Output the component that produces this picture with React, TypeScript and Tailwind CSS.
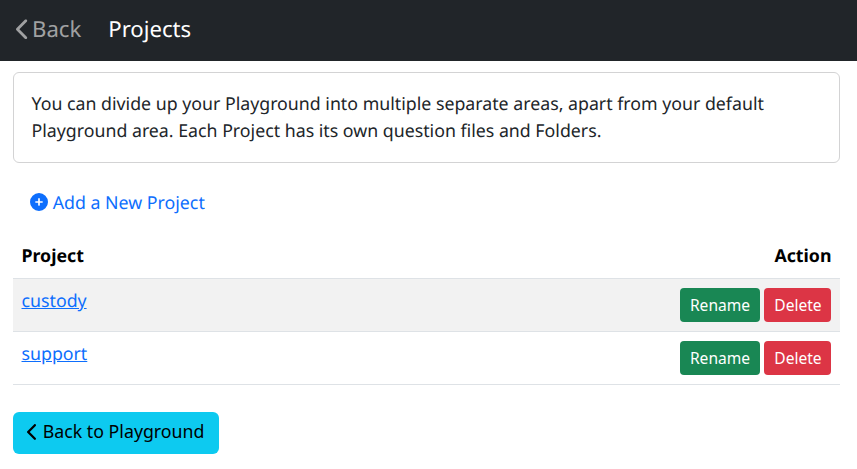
import React from "react";

const projects = ["custody", "support"];

function ChevronLeft({ className }: { className: string }) {
  return (
    <svg viewBox="0 0 320 512" fill="currentColor" className={className} aria-hidden="true">
      <path d="M9.4 233.4c-12.5 12.5-12.5 32.8 0 45.3l192 192c12.5 12.5 32.8 12.5 45.3 0s12.5-32.8 0-45.3L77.3 256 246.6 86.6c12.5-12.5 12.5-32.8 0-45.3s-32.8-12.5-45.3 0l-192 192z" />
    </svg>
  );
}

function CirclePlus({ className }: { className: string }) {
  return (
    <svg viewBox="0 0 512 512" fill="currentColor" className={className} aria-hidden="true">
      <path d="M256 512A256 256 0 1 0 256 0a256 256 0 1 0 0 512zM232 344V280H168c-13.300 0-24-10.700-24-24s10.700-24 24-24h64V168c0-13.300 10.700-24 24-24s24 10.700 24 24v64h64c13.300 0 24 10.700 24 24s-10.700 24-24 24H280v64c0 13.300-10.700 24-24 24s-24-10.700-24-24z" />
    </svg>
  );
}

export default function App() {
  return (
    <div className="h-[469px] w-[857px] overflow-hidden bg-white font-['Noto_Sans',sans-serif] text-[17.75px] leading-[27px] text-[#212529] [text-rendering:geometricPrecision]">
      <nav className="flex h-[61px] items-center bg-[#212529] px-[15px] pb-[2px] text-[22.15px]">
        <a href="#" className="flex items-center text-[#a0a1a2]">
          <ChevronLeft className="mr-[2px] mb-px ml-px h-[22.5px] w-[14px]" />
          Back
        </a>
        <span className="ml-[27px] text-white">Projects</span>
      </nav>
      <main className="ml-[13px] w-[827px] pt-[11px]">
        <div className="h-[91px] rounded-[6px] border border-[#d3d3d4] px-[17.5px] pt-[18px]">
          <p className="w-[770px]">
            You can divide up your Playground into multiple separate areas, apart from your default Playground area. Each Project has its own question files and Folders.
          </p>
        </div>
        <a href="#" className="mt-[27px] ml-[17px] flex w-fit items-center text-[#0d6efd]">
          <CirclePlus className="mr-[4.75px] mb-[3px] size-[18px]" />
          Add a New Project
        </a>
        <table className="mt-[16px] w-full border-collapse text-black">
          <thead>
            <tr className="h-[45px] border-b border-[#dee2e6] font-bold">
              <th className="px-[8.5px] pt-[3px] text-left">Project</th>
              <th className="px-[8.5px] pt-[3px] text-right">Action</th>
            </tr>
          </thead>
          <tbody>
            {projects.map((name) => (
              <tr key={name} className="h-[53px] border-b border-[#dee2e6] odd:bg-[#f2f2f2]">
                <td className="px-[8.5px] pt-[9px] align-top">
                  <a href="#" className="text-[#0d6efd] underline">{name}</a>
                </td>
                <td className="px-[9px] pt-[9px] align-top">
                  <div className="flex justify-end gap-1 text-[15.55px] text-white">
                    <button className="h-[34px] w-20 rounded-[4px] bg-[#198754] pt-px">Rename</button>
                    <button className="h-[34px] w-[67px] rounded-[4px] bg-[#dc3545] pt-px pl-px">Delete</button>
                  </div>
                </td>
              </tr>
            ))}
          </tbody>
        </table>
        <button className="mt-[27px] flex h-[42px] w-[206px] items-center rounded-[6px] bg-[#0dcaf0] pb-[3px] pl-[13.5px] text-black">
          <ChevronLeft className="mt-[2px] mr-[5px] h-[18px] w-[11.25px]" />
          Back to Playground
        </button>
      </main>
    </div>
  );
}
